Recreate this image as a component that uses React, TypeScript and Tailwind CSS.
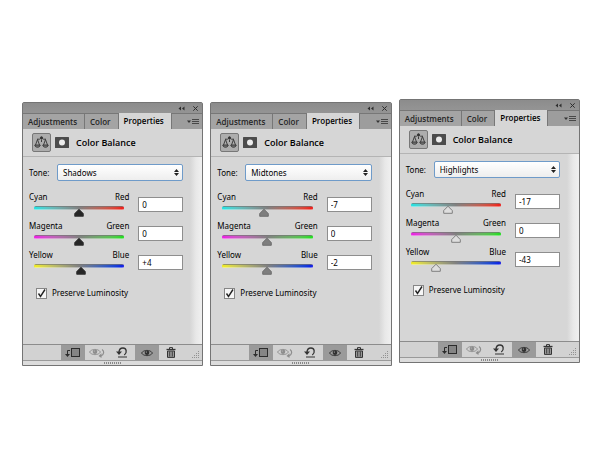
import { useState } from "react";

type Tone = "Shadows" | "Midtones" | "Highlights";

type Balance = {
  cyanRed: number;
  magentaGreen: number;
  yellowBlue: number;
};

const TONES: Tone[] = ["Shadows", "Midtones", "Highlights"];
const TABS = ["Adjustments", "Color", "Properties"];

const CHANNELS: {
  key: keyof Balance;
  from: string;
  to: string;
  track: string;
}[] = [
  {
    key: "cyanRed",
    from: "Cyan",
    to: "Red",
    track: "from-[#10e4e4] via-[#808080] to-[#f01010]",
  },
  {
    key: "magentaGreen",
    from: "Magenta",
    to: "Green",
    track: "from-[#ee10e6] via-[#808080] to-[#10e010]",
  },
  {
    key: "yellowBlue",
    from: "Yellow",
    to: "Blue",
    track: "from-[#f2ee10] via-[#808080] to-[#1010e8]",
  },
];

const THUMBS: Record<Tone, { fill: string; stroke: string }> = {
  Shadows: { fill: "#262626", stroke: "#333333" },
  Midtones: { fill: "#7e7e7e", stroke: "#6a6a6a" },
  Highlights: { fill: "#dedede", stroke: "#757575" },
};

export default function App() {
  return (
    <main className="flex min-h-screen items-start gap-[7px] bg-white pt-[99px] pr-5 pb-24 pl-[22px] font-['Noto_Sans','Open_Sans',sans-serif] text-[8px] leading-3 text-black">
      <div className="min-w-0 flex-1 pt-[3px]">
        <PropertiesPanel
          id="shadows"
          initialTone="Shadows"
          initial={{ cyanRed: 0, magentaGreen: 0, yellowBlue: 4 }}
        />
      </div>
      <div className="min-w-0 flex-1 pt-[3px]">
        <PropertiesPanel
          id="midtones"
          initialTone="Midtones"
          initial={{ cyanRed: -7, magentaGreen: 0, yellowBlue: -2 }}
        />
      </div>
      <div className="min-w-0 flex-1">
        <PropertiesPanel
          id="highlights"
          initialTone="Highlights"
          initial={{ cyanRed: -17, magentaGreen: 0, yellowBlue: -43 }}
        />
      </div>
    </main>
  );
}

const PropertiesPanel = ({
  id,
  initialTone,
  initial,
}: {
  id: string;
  initialTone: Tone;
  initial: Balance;
}) => {
  const [tone, setTone] = useState<Tone>(initialTone);
  const [balance, setBalance] = useState<Balance>(initial);
  const [preserve, setPreserve] = useState(true);

  return (
    <section className="rounded-t-xs border border-[#747474] bg-[#d6d6d6]">
      {/* Title bar */}
      <div className="flex h-[10px] items-center justify-end gap-2 bg-linear-to-b from-[#8c8c8c] to-[#949494] pr-1">
        <button aria-label="Collapse">
          <svg width="7" height="5" viewBox="0 0 7 5" fill="#2e2e2e">
            <path d="M3 .5v4L.5 2.5zM6.500 .5v4L4 2.500z" />
          </svg>
        </button>
        <button aria-label="Close">
          <svg width="5" height="5" viewBox="0 0 5 5" stroke="#2e2e2e">
            <path d="M.3.3l4.4 4.4M4.7.3L.3 4.7" />
          </svg>
        </button>
      </div>

      {/* Tabs */}
      <div className="flex h-4 bg-[#9d9d9d]">
        {TABS.map((tab) => (
          <button
            key={tab}
            className={`border-r border-[#777777] pr-[7px] pl-[5px] font-['Open_Sans','Noto_Sans',sans-serif] font-semibold ${
              tab === "Properties"
                ? "bg-[#d6d6d6] text-black"
                : "border-t bg-[#a4a4a4] text-[#262626]"
            }`}
          >
            {tab}
          </button>
        ))}
        <button
          aria-label="Panel menu"
          className="flex flex-1 items-center justify-end border-t border-[#777777] pr-[3px]"
        >
          <svg width="12" height="8" viewBox="0 0 12 8">
            <path d="M0 2.5h4L2 5z" fill="#333" />
            <path d="M5 1.5h7M5 3.5h7M5 5.5h7" stroke="#484848" />
          </svg>
        </button>
      </div>

      {/* Heading */}
      <header className="flex h-7 items-center gap-1 border-b border-[#b4b4b4] pl-[9px]">
        <span className="flex size-[19px] items-center justify-center rounded-xs border border-[#777777] bg-[#adadad]">
          <BalanceIcon />
        </span>
        <MaskIcon />
        <h2 className="ml-[3px] font-['Open_Sans','Noto_Sans',sans-serif] text-[9px] font-semibold">
          Color Balance
        </h2>
      </header>

      <div className="flex h-[187px]">
        <div className="min-w-0 flex-1 pt-[7px] pr-[7px] pl-1.5">
          <div className="flex items-center">
            <label htmlFor={`${id}-tone`} className="w-7">
              Tone:
            </label>
            <div className="relative min-w-0 flex-1">
              <select
                id={`${id}-tone`}
                value={tone}
                onChange={(e) => setTone(e.target.value as Tone)}
                className="block h-[17px] w-full appearance-none rounded-xs border border-[#6f9bc9] bg-linear-to-b from-white to-[#eeeeee] px-[5px] outline-none"
              >
                {TONES.map((name) => (
                  <option key={name}>{name}</option>
                ))}
              </select>
              <svg
                className="pointer-events-none absolute top-[5px] right-1"
                width="5"
                height="7"
                viewBox="0 0 5 7"
                fill="#222"
              >
                <path d="M2.5 0L5 3H0zM2.5 7L5 4H0z" />
              </svg>
            </div>
          </div>

          <div className="mt-2.5 flex flex-col gap-[5px]">
            {CHANNELS.map((channel) => (
              <ChannelRow
                key={channel.key}
                from={channel.from}
                to={channel.to}
                track={channel.track}
                tone={tone}
                value={balance[channel.key]}
                onChange={(value) =>
                  setBalance((prev) => ({ ...prev, [channel.key]: value }))
                }
              />
            ))}
          </div>

          <label className="mt-3.5 ml-[7px] flex items-center gap-[5px]">
            <span className="relative block size-[11px]">
              <input
                type="checkbox"
                checked={preserve}
                onChange={(e) => setPreserve(e.target.checked)}
                className="block size-[11px] appearance-none border border-[#868686] bg-[#f6f6f6]"
              />
              {preserve && (
                <svg
                  className="pointer-events-none absolute inset-0"
                  width="11"
                  height="11"
                  viewBox="0 0 11 11"
                  fill="none"
                  stroke="#222"
                  strokeWidth="1.4"
                >
                  <path d="M2.5 5.5l2 3L9 1.5" />
                </svg>
              )}
            </span>
            Preserve Luminosity
          </label>
        </div>
        <div className="w-3 bg-linear-to-r from-[#d6d6d6] via-[#e8e8e8] to-[#f0f0f0]" />
      </div>

      {/* Footer actions */}
      <footer className="flex h-4 border-t border-[#8c8c8c] bg-[#d2d2d2] pl-[38px]">
        <button
          aria-label="Clip to layer"
          className="flex w-6 items-center justify-center bg-[#9a9a9a]"
        >
          <ClipIcon />
        </button>
        <button
          aria-label="View previous state"
          className="flex w-6 items-center justify-center"
        >
          <PreviousStateIcon />
        </button>
        <button
          aria-label="Reset"
          className="flex w-[26px] items-center justify-center"
        >
          <ResetIcon />
        </button>
        <button
          aria-label="Toggle visibility"
          className="flex w-6 items-center justify-center bg-[#9a9a9a]"
        >
          <svg width="12" height="8" viewBox="0 0 12 8">
            <EyeShape color="#303030" />
          </svg>
        </button>
        <button
          aria-label="Delete"
          className="flex w-6 items-center justify-center"
        >
          <TrashIcon />
        </button>
        <svg
          className="mt-auto mr-[2px] mb-px ml-auto"
          width="8"
          height="8"
          viewBox="0 0 8 8"
          fill="#929292"
        >
          <path d="M6 0h1v1H6zM4 2h1v1H4zM6 2h1v1H6zM2 4h1v1H2zM4 4h1v1H4zM6 4h1v1H6zM0 6h1v1H0zM2 6h1v1H2zM4 6h1v1H4zM6 6h1v1H6z" />
        </svg>
      </footer>
      <div className="flex h-[5px] items-center justify-center border-t border-[#9a9a9a] bg-[#dcdcdc]">
        <svg width="17" height="2" viewBox="0 0 17 2">
          <path d="M0 1h17" stroke="#888" strokeWidth="2" strokeDasharray="1 1" />
        </svg>
      </div>
    </section>
  );
};

const ChannelRow = ({
  from,
  to,
  track,
  tone,
  value,
  onChange,
}: {
  from: string;
  to: string;
  track: string;
  tone: Tone;
  value: number;
  onChange: (value: number) => void;
}) => {
  const thumb = THUMBS[tone];

  return (
    <div className="flex h-6 gap-[9px]">
      <div className="min-w-0 flex-1">
        <div className="flex justify-between">
          <span>{from}</span>
          <span>{to}</span>
        </div>
        <div className="relative mx-[5px] mt-[3px] h-[10px]">
          <div
            className={`h-1 rounded-xs border border-t-[#777777]/70 border-r-transparent border-b-white/40 border-l-transparent bg-linear-to-r bg-origin-border ${track}`}
          />
          <svg
            className="absolute top-[2px] -translate-x-1/2"
            style={{ left: `${(value + 100) / 2}%` }}
            width="10"
            height="9"
            viewBox="0 0 10 9"
          >
            <path
              d="M5 1.200L9.300 5.600v2.700H.700V5.600z"
              fill={thumb.fill}
              stroke={thumb.stroke}
              strokeWidth="0.900"
              strokeLinejoin="round"
            />
          </svg>
          <input
            type="range"
            aria-label={`${from} to ${to}`}
            min={-100}
            max={100}
            value={value}
            onChange={(e) => onChange(Number(e.target.value))}
            className="absolute inset-0 h-full w-full cursor-pointer opacity-0"
          />
        </div>
      </div>
      <input
        type="text"
        aria-label={`${from} to ${to} value`}
        value={value > 0 ? `+${value}` : `${value}`}
        onChange={(e) => {
          const next = Number(e.target.value);
          if (!Number.isNaN(next)) onChange(Math.max(-100, Math.min(100, next)));
        }}
        className="mt-[6px] h-[15px] w-[45px] border border-[#8e8e8e] bg-white px-[3px]"
      />
    </div>
  );
};

const BalanceIcon = () => (
  <svg
    width="15"
    height="15"
    viewBox="0 0 15 15"
    fill="none"
    stroke="#333"
    strokeWidth="0.9"
  >
    <path d="M3 4.200h2.500c.8 0 1.200-1.200 2-1.200s1.200 1.200 2 1.200H12M7.500 4.500v2.500" />
    <circle cx="7.500" cy="2.800" r="1.100" fill="#333" />
    <path d="M3.500 4.500L1.500 10M3.500 4.500l2 5.500M11.500 4.500l-2 5.500M11.500 4.500l2 5.500" />
    <path
      d="M.8 10h5.400c0 3-5.400 3-5.400 0zM8.800 10h5.400c0 3-5.400 3-5.400 0z"
      fill="#777"
    />
  </svg>
);

const MaskIcon = () => (
  <svg width="14" height="11" viewBox="0 0 14 11">
    <rect width="14" height="11" rx="0.5" fill="#4c4c4c" />
    <circle cx="7" cy="5.5" r="3" fill="#ededed" />
  </svg>
);

const ClipIcon = () => (
  <svg width="16" height="10" viewBox="0 0 16 10">
    <rect x="6.5" y="0.5" width="8" height="8" fill="#858585" stroke="#2c2c2c" />
    <path d="M5 2.5H2.5V7" fill="none" stroke="#2c2c2c" />
    <path d="M0 6h5L2.5 9z" fill="#2c2c2c" />
  </svg>
);

const EyeShape = ({ color }: { color: string }) => (
  <>
    <path
      d="M.5 4C2.5.8 9 .3 11.5 4 9.5 7.5 2.5 7.5.5 4z"
      fill="none"
      stroke={color}
      strokeWidth="0.9"
    />
    <circle cx="6" cy="3.8" r="2.3" fill={color} />
    <circle cx="5.4" cy="3" r="0.6" fill="#bbb" />
  </>
);

const PreviousStateIcon = () => (
  <svg width="16" height="10" viewBox="0 0 16 10">
    <EyeShape color="#8d8d8d" />
    <path
      d="M13 1.5c2.5 1.5 2.2 5-1 6.500"
      fill="none"
      stroke="#8d8d8d"
      strokeWidth="1.2"
    />
    <path d="M12.5 5.3V10L9.5 8z" fill="#8d8d8d" />
  </svg>
);

const ResetIcon = () => (
  <svg width="12" height="11" viewBox="0 0 12 11">
    <path
      d="M3 5.5C3 2.3 5 1 7 1c3.5 0 4.5 4.5 1.3 7"
      fill="none"
      stroke="#333"
      strokeWidth="1.3"
    />
    <path d="M0 4.5h6L3 8z" fill="#333" />
    <path d="M2 10h9" stroke="#333" />
  </svg>
);

const TrashIcon = () => (
  <svg width="10" height="11" viewBox="0 0 10 11" fill="none" stroke="#333">
    <path d="M3.5 2V.6h3V2" />
    <path d="M.5 2.5h9" strokeWidth="1.3" />
    <path d="M1.5 4h7v6.4h-7z" fill="#999" />
    <path d="M3.7 4.5v5M6.3 4.5v5" strokeWidth="0.9" />
  </svg>
);
